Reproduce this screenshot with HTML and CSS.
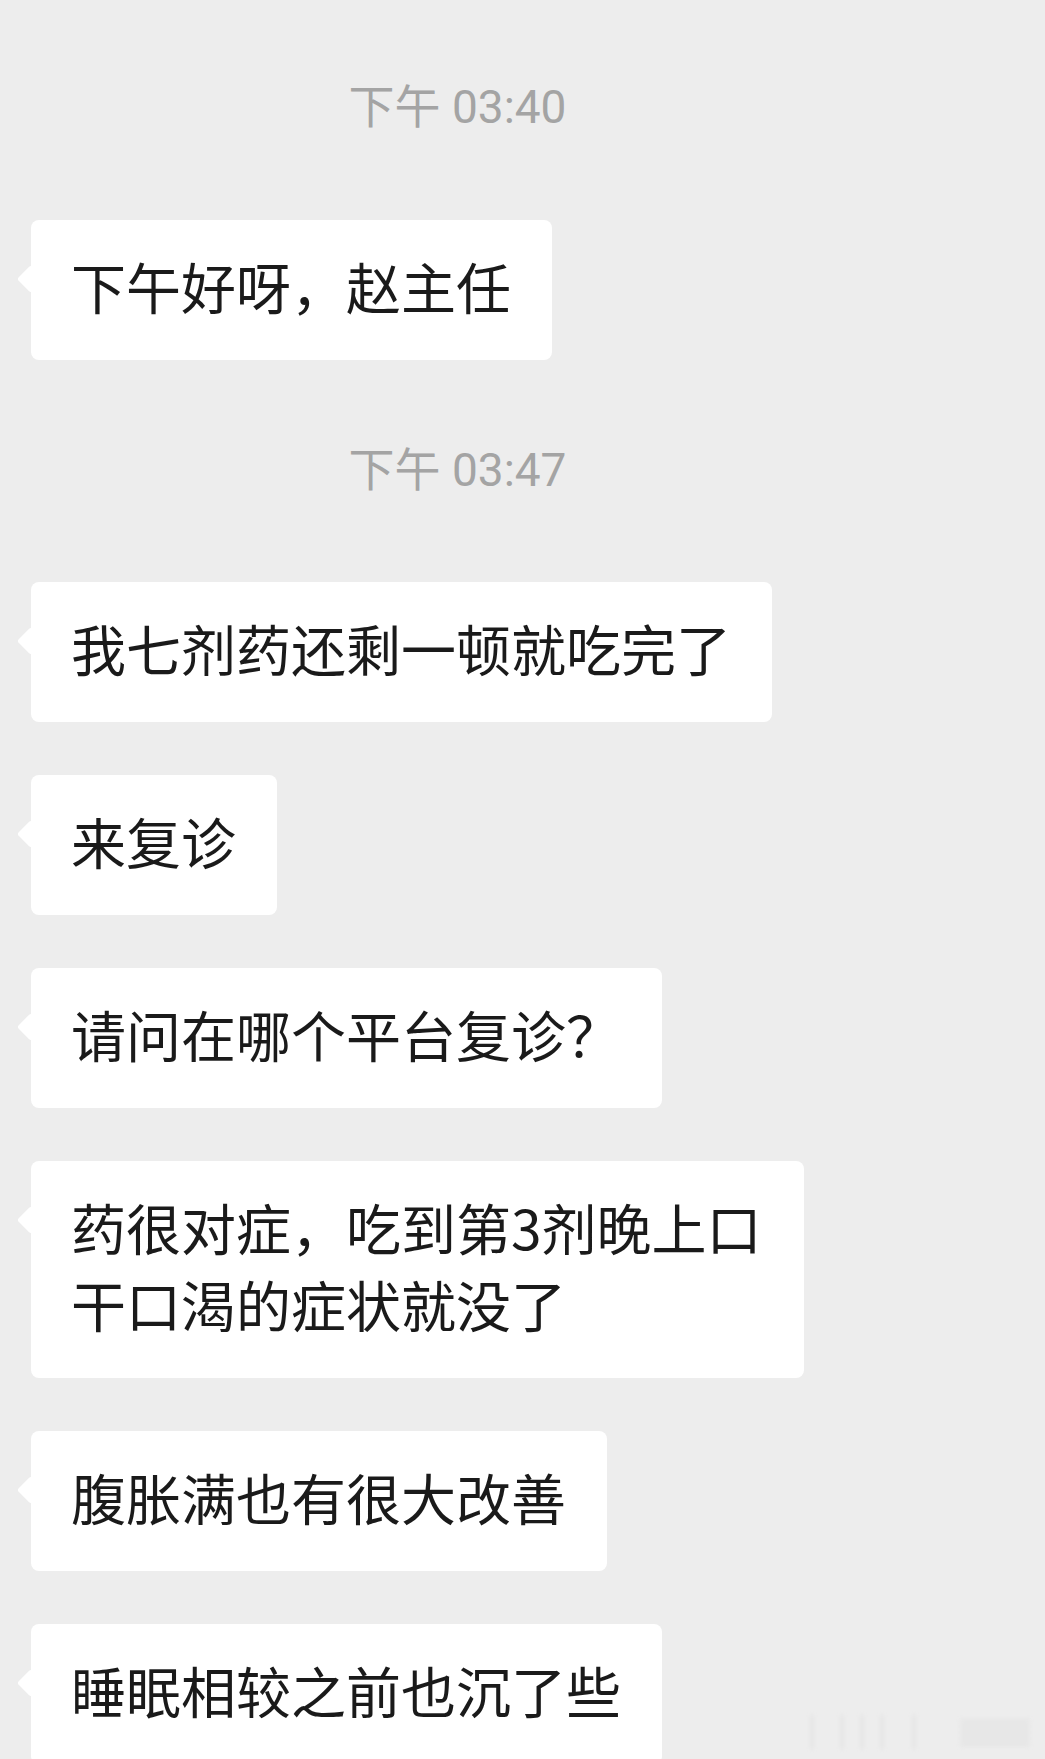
FILE: index.html
```html
<!DOCTYPE html>
<html lang="zh-CN">
<head>
<meta charset="utf-8">
<title>聊天记录</title>
<link rel="stylesheet" href="styles.css">
</head>
<body>
<div class="chat">
  <div class="time time-first">下午 03:40</div>
  <div class="msg"><div class="bubble">下午好呀，赵主任</div></div>
  <div class="time">下午 03:47</div>
  <div class="msg"><div class="bubble">我七剂药还剩一顿就吃完了</div></div>
  <div class="msg"><div class="bubble">来复诊</div></div>
  <div class="msg"><div class="bubble">请问在哪个平台复诊？</div></div>
  <div class="msg"><div class="bubble">药很对症，吃到第3剂晚上口干口渴的症状就没了</div></div>
  <div class="msg"><div class="bubble">腹胀满也有很大改善</div></div>
  <div class="msg"><div class="bubble">睡眠相较之前也沉了些</div></div>
</div>
<div class="watermark">
  <span class="wm-bar b1"></span>
  <span class="wm-bar b2"></span>
  <span class="wm-bar b3"></span>
  <span class="wm-bar b4"></span>
  <span class="wm-bar b5"></span>
  <span class="wm-block"></span>
</div>
</body>
</html>
```
FILE: styles.css
```css
html, body {
  margin: 0;
  padding: 0;
}
body {
  background: #ededed;
  height: 1759px;
  overflow: hidden;
  position: relative;
  font-family: "Noto Sans CJK SC", "Noto Sans", sans-serif;
}
.chat {
  display: flex;
  flex-direction: column;
  align-items: flex-start;
  padding-left: 31px;
}
.time {
  align-self: stretch;
  box-sizing: border-box;
  padding-right: 161px;
  text-align: center;
  font-family: Roboto, "Noto Sans CJK SC", sans-serif;
  font-size: 46px;
  line-height: 60px;
  height: 60px;
  color: #a4a4a4;
  margin-top: 27px;
  margin-bottom: 82px;
}
.time-first {
  margin-top: 77px;
  margin-bottom: 83px;
}
.msg {
  margin-bottom: 53px;
}
.bubble {
  position: relative;
  box-sizing: border-box;
  max-width: 773px;
  background: #ffffff;
  border-radius: 8px;
  padding: 27px 41px 36px 40px;
  font-size: 55px;
  line-height: 77px;
  color: #1a1a1a;
}
.bubble::before {
  content: "";
  position: absolute;
  left: -10px;
  top: 49px;
  width: 20px;
  height: 20px;
  background: #ffffff;
  transform: rotate(45deg);
  border-radius: 3px;
}
.watermark {
  position: absolute;
  left: 808px;
  top: 1713px;
  width: 226px;
  height: 38px;
  filter: blur(2px);
  opacity: 0.3;
}
.wm-bar {
  position: absolute;
  top: 2px;
  width: 4px;
  height: 34px;
  background: #d4d4d4;
}
.b1 { left: 2px; }
.b2 { left: 32px; }
.b3 { left: 52px; }
.b4 { left: 72px; }
.b5 { left: 104px; }
.wm-block {
  position: absolute;
  left: 152px;
  top: 6px;
  width: 70px;
  height: 28px;
  background: repeating-linear-gradient(180deg, #d2d2d2 0 3px, #e4e4e4 3px 6px);
}
```
